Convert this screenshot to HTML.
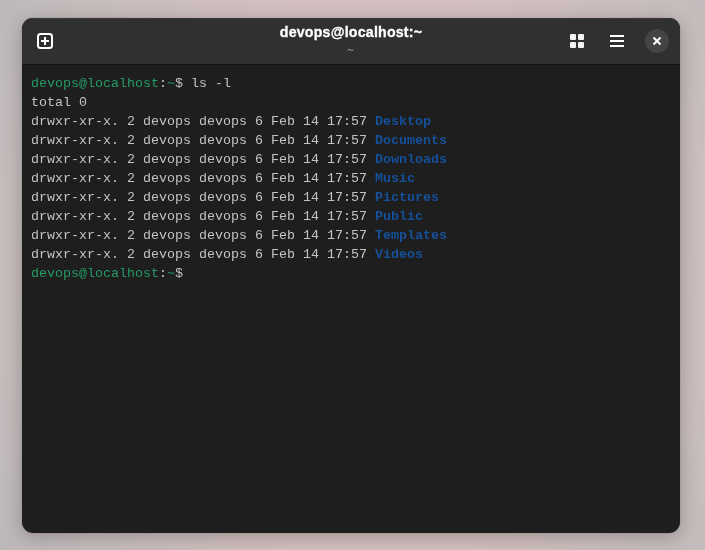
<!DOCTYPE html>
<html>
<head>
<meta charset="utf-8">
<title>devops@localhost:~</title>
<style>
html,body{margin:0;padding:0;}
body{width:705px;height:550px;overflow:hidden;position:relative;
  background:radial-gradient(ellipse 440px 520px at 380px 275px, #d6c2c2 0%, #d4c0c0 55%, #c6bdbd 85%, #bbb7b7 105%);
  font-family:"Liberation Sans",sans-serif;}
.win{will-change:transform;position:absolute;left:22px;top:18px;width:658px;height:515px;border-radius:11px;background:#1e1e1e;overflow:hidden;
  box-shadow:0 0 0 1px rgba(0,0,0,0.06), 0 4px 18px 2px rgba(0,0,0,0.21);}
.hdr{position:absolute;left:0;top:0;width:658px;height:46px;background:#303030;box-shadow:0 1px 0 rgba(0,0,0,0.30), inset 0 1px 0 rgba(255,255,255,0.05);}
.title{position:absolute;left:0;width:658px;top:5.4px;text-align:center;color:#fff;font-weight:bold;font-size:14.2px;line-height:18px;letter-spacing:0.2px;-webkit-text-stroke:0.3px #fff;}
.sub{position:absolute;left:-0.6px;width:658px;top:25.8px;text-align:center;color:#9a9a9a;font-size:12px;line-height:12px;}
.term{position:absolute;left:9px;top:56px;margin:0;font-family:"Liberation Mono",monospace;font-size:13.333px;line-height:19px;color:#c3c3c3;white-space:pre;}
.g{color:#249c64;}
.b{color:#15509a;font-weight:bold;}
svg{position:absolute;}
</style>
</head>
<body>
<div class="win">
  <div class="hdr">
    <svg style="left:15px;top:15px" width="16" height="16" viewBox="0 0 16 16"><rect x="1" y="1" width="14" height="14" rx="2.5" fill="none" stroke="#fff" stroke-width="2"/><path d="M8 4v8M4 8h8" stroke="#fff" stroke-width="2" fill="none"/></svg>
    <div class="title">devops@localhost:~</div>
    <div class="sub">~</div>
    <svg style="left:548px;top:16px" width="14" height="14" viewBox="0 0 14 14"><g fill="#f3f3f3"><rect x="0" y="0" width="6" height="6" rx="1"/><rect x="8" y="0" width="6" height="6" rx="1"/><rect x="0" y="8" width="6" height="6" rx="1"/><rect x="8" y="8" width="6" height="6" rx="1"/></g></svg>
    <svg style="left:588px;top:17px" width="14" height="12" viewBox="0 0 14 12"><g fill="#fff"><rect x="0" y="0" width="14" height="2"/><rect x="0" y="5" width="14" height="2"/><rect x="0" y="10" width="14" height="2"/></g></svg>
    <svg style="left:623px;top:11px" width="24" height="24" viewBox="0 0 24 24"><circle cx="12" cy="12" r="12" fill="#444444"/><path d="M8.5 8.5l7 7M15.5 8.5l-7 7" stroke="#fff" stroke-width="2" fill="none"/></svg>
  </div>
<pre class="term"><span class="g">devops@localhost</span>:<span class="g">~</span>$ ls -l
total 0
drwxr-xr-x. 2 devops devops 6 Feb 14 17:57 <span class="b">Desktop</span>
drwxr-xr-x. 2 devops devops 6 Feb 14 17:57 <span class="b">Documents</span>
drwxr-xr-x. 2 devops devops 6 Feb 14 17:57 <span class="b">Downloads</span>
drwxr-xr-x. 2 devops devops 6 Feb 14 17:57 <span class="b">Music</span>
drwxr-xr-x. 2 devops devops 6 Feb 14 17:57 <span class="b">Pictures</span>
drwxr-xr-x. 2 devops devops 6 Feb 14 17:57 <span class="b">Public</span>
drwxr-xr-x. 2 devops devops 6 Feb 14 17:57 <span class="b">Templates</span>
drwxr-xr-x. 2 devops devops 6 Feb 14 17:57 <span class="b">Videos</span>
<span class="g">devops@localhost</span>:<span class="g">~</span>$ </pre>
</div>
</body>
</html>
